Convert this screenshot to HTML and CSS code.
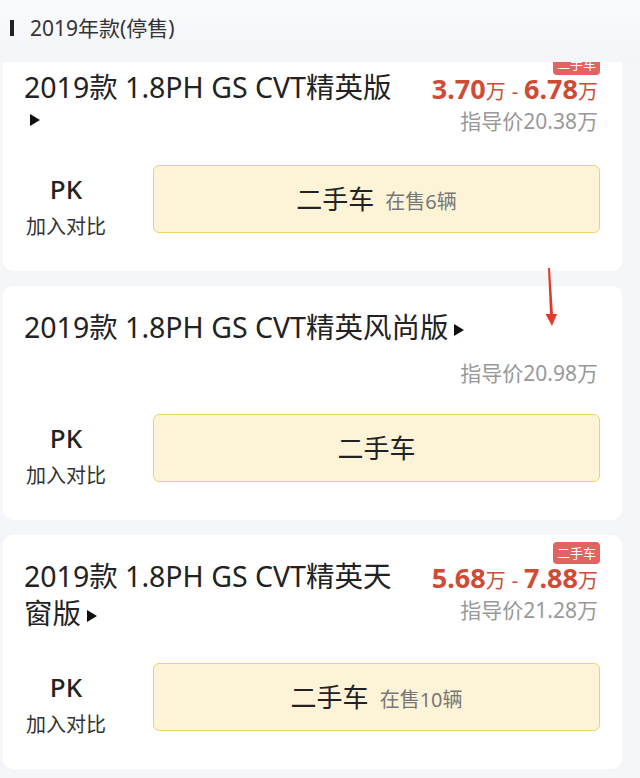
FILE: index.html
```html
<!DOCTYPE html>
<html>
<head>
    <meta charset="utf-8">
    <title>2019年款(停售)</title>
    <link rel="stylesheet" href="styles.css">
</head>
<body>
    <header class="year-head">
        <span class="year-bar"></span>
        <span class="year-title">2019年款(停售)</span>
    </header>

    <main class="spec-list">
        <section class="spec-card">
            <div class="spec-head">
                <div class="spec-title">
                    <span class="spec-name">2019款 1.8PH GS CVT精英版</span>
                    <div class="more-row"><i class="more"></i></div>
                </div>
                <div class="spec-price">
                    <span class="used-tag">二手车</span>
                    <div class="price-range"><b>3.70</b>万<span class="dash">-</span><b>6.78</b>万</div>
                    <div class="guide-price">指导价20.38万</div>
                </div>
            </div>
            <div class="spec-foot">
                <div class="pk">
                    <div class="pk-mark">PK</div>
                    <div class="pk-text">加入对比</div>
                </div>
                <div class="used-btn"><span class="used-label">二手车</span> <span class="used-count">在售6辆</span></div>
            </div>
        </section>

        <section class="spec-card spec-card-plain">
            <div class="spec-title"><span class="spec-name">2019款 1.8PH GS CVT精英风尚版</span><i class="more"></i></div>
            <div class="guide-price guide-row">指导价20.98万</div>
            <div class="spec-foot">
                <div class="pk">
                    <div class="pk-mark">PK</div>
                    <div class="pk-text">加入对比</div>
                </div>
                <div class="used-btn"><span class="used-label">二手车</span></div>
            </div>
        </section>

        <section class="spec-card">
            <div class="spec-head">
                <div class="spec-title"><span class="spec-name">2019款 1.8PH GS CVT精英天窗版</span><i class="more"></i></div>
                <div class="spec-price">
                    <span class="used-tag">二手车</span>
                    <div class="price-range"><b>5.68</b>万<span class="dash">-</span><b>7.88</b>万</div>
                    <div class="guide-price">指导价21.28万</div>
                </div>
            </div>
            <div class="spec-foot">
                <div class="pk">
                    <div class="pk-mark">PK</div>
                    <div class="pk-text">加入对比</div>
                </div>
                <div class="used-btn"><span class="used-label">二手车</span> <span class="used-count">在售10辆</span></div>
            </div>
        </section>
    </main>

    <!-- red annotation arrow drawn over the screenshot -->
    <svg class="mark-arrow" width="640" height="778" viewBox="0 0 640 778">
        <polygon points="548,268 550,268 553,315 550,315" fill="#e23b2b"/>
        <polygon points="545.5,314 557,314 552,326" fill="#e23b2b"/>
    </svg>
</body>
</html>
```

FILE: styles.css
```css
body {
    margin: 0;
    background-color: #f5f6fa;
    font-family: "Noto Sans", "Noto Sans CJK SC", sans-serif;
    color: #222;
}

.year-head {
    position: sticky;
    top: 0;
    z-index: 1;
    height: 62px;
    box-sizing: border-box;
    padding: 13px 0 0 10px;
    display: flex;
    align-items: flex-start;
    background: linear-gradient(#fafbfd, #f4f5f9);
}

.year-bar {
    width: 4px;
    height: 16px;
    margin-top: 7px;
    margin-right: 16px;
    background-color: #222;
}

.year-title {
    font-size: 21px;
    line-height: 30px;
    color: #333;
}

.spec-list {
    margin-top: -16px;
}

.spec-card {
    margin: 0 18px 15px 3px;
    padding: 7px 22px 31px 21px;
    background-color: #fff;
    border-radius: 10px;
}

.spec-head {
    display: flex;
    align-items: flex-start;
}

.spec-title {
    margin-top: 16px;
    max-width: 374px;
    font-size: 28.5px;
    line-height: 37px;
    color: #222;
}

.spec-card-plain .spec-title {
    max-width: none;
}

.more {
    display: inline-block;
    width: 0;
    height: 0;
    margin-left: 6px;
    border-left: 10px solid #111;
    border-top: 6px solid transparent;
    border-bottom: 6px solid transparent;
    vertical-align: middle;
}

.more-row {
    height: 27px;
    display: flex;
    align-items: center;
}

.spec-price {
    margin-left: auto;
    margin-right: 2px;
    display: flex;
    flex-direction: column;
    align-items: flex-end;
}

.used-tag {
    margin-right: -2px;
    padding: 0 4px;
    font-size: 13px;
    line-height: 22px;
    color: #fff;
    background-color: #e26360;
    border-radius: 4px;
}

.price-range {
    height: 32px;
    margin-top: 1px;
    font-size: 20px;
    line-height: 32px;
    color: #cf4b35;
    white-space: nowrap;
}

.price-range b {
    font-size: 27px;
    line-height: 20px;
    font-weight: bold;
}

.dash {
    margin: 0 6px;
}

.guide-price {
    font-size: 21px;
    line-height: 26px;
    color: #999;
    white-space: nowrap;
}

.guide-row {
    margin-top: 14px;
    margin-right: 2px;
    text-align: right;
}

.spec-foot {
    margin-top: 31px;
    display: flex;
    align-items: flex-start;
}

.spec-card-plain .spec-foot {
    margin-top: 28px;
}

.pk {
    width: 84px;
    margin-right: 45px;
    padding-top: 9px;
    text-align: center;
}

.pk-mark {
    font-size: 26px;
    line-height: 30px;
    font-weight: 500;
    color: #222;
}

.pk-text {
    margin-top: 10px;
    font-size: 20px;
    line-height: 26px;
    color: #333;
}

.used-btn {
    flex: 1;
    height: 68px;
    box-sizing: border-box;
    border: 1px solid #f0d36e;
    border-radius: 6px;
    background-color: #fdf4d8;
    text-align: center;
    line-height: 66px;
    white-space: nowrap;
}

.used-label {
    font-size: 26px;
    color: #222;
}

.used-count {
    margin-left: 7px;
    font-size: 20px;
    color: #777;
}

.mark-arrow {
    position: absolute;
    left: 0;
    top: 0;
    z-index: 2;
    pointer-events: none;
}
```
